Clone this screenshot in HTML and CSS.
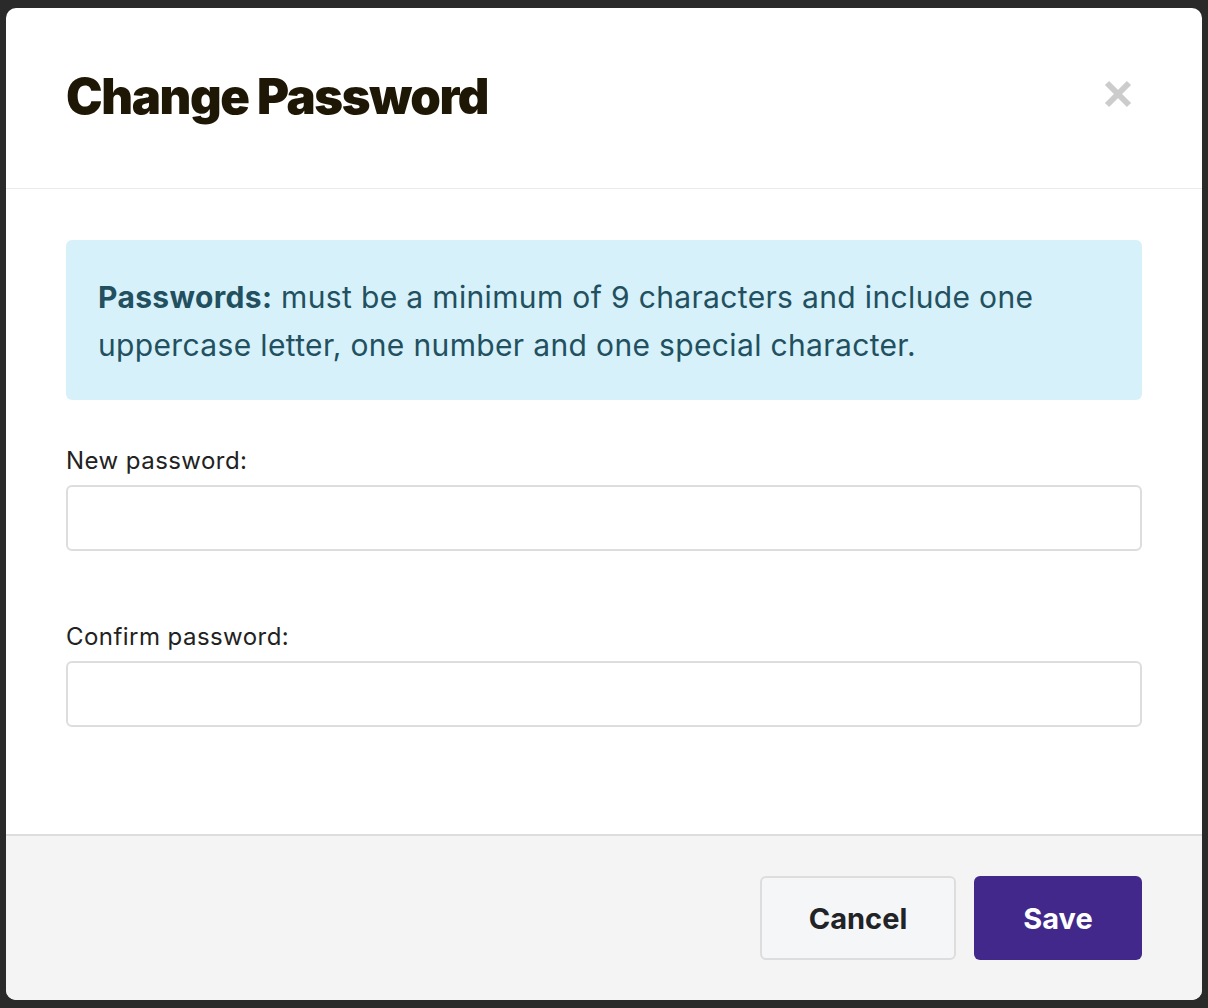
FILE: index.html
```html
<!DOCTYPE html>
<html>
<head>
<meta charset="utf-8">
<link rel="stylesheet" href="styles.css">
</head>
<body>
<div class="modal">
  <div class="modal-header">
    <h1 class="title">Change Password</h1>
    <button class="close" aria-label="Close">
      <svg width="28" height="28" viewBox="0 0 28 28"><path d="M3 3 L25 25 M25 3 L3 25" stroke="#cccccc" stroke-width="6" stroke-linecap="butt"/></svg>
    </button>
  </div>
  <div class="modal-body">
    <div class="info"><strong>Passwords:</strong> must be a minimum of 9 characters and include one uppercase letter, one number and one special character.</div>
    <div class="field">
      <label class="label">New password:</label>
      <input class="input" type="password">
    </div>
    <div class="field">
      <label class="label">Confirm password:</label>
      <input class="input" type="password">
    </div>
  </div>
  <div class="modal-footer">
    <button class="btn btn-cancel">Cancel</button>
    <button class="btn btn-save">Save</button>
  </div>
</div>
</body>
</html>
```

FILE: styles.css
```css
*, *::before, *::after {
  box-sizing: border-box;
}
html, body {
  margin: 0;
  padding: 0;
  background: #2a2a2a;
}
body {
  padding: 8px 6px;
  font-family: Inter, "Noto Sans", sans-serif;
}
.modal {
  width: 1196px;
  height: 992px;
  background: #ffffff;
  border-radius: 10px;
  overflow: hidden;
  display: flex;
  flex-direction: column;
}
.modal-header {
  height: 181px;
  flex: none;
  border-bottom: 1px solid #ebebeb;
  display: flex;
  align-items: center;
  justify-content: space-between;
  padding: 0 70px 4px 60px;
}
.title {
  margin: 0;
  font-family: Inter, sans-serif;
  font-weight: 900;
  font-size: 49px;
  letter-spacing: -1.4px;
  color: #1f1705;
}
.close {
  border: 0;
  background: none;
  padding: 0;
  width: 28px;
  height: 28px;
  display: flex;
  margin-bottom: 4px;
}
.modal-body {
  flex: 1;
  padding: 51px 60px 0 60px;
}
.info {
  background: #d6f1fa;
  border-radius: 6px;
  padding: 33px 32px 31px 32px;
  color: #22505f;
  font-size: 30px;
  line-height: 48px;
  letter-spacing: 0.35px;
}
.info strong {
  font-weight: 700;
}
.field {
  display: flex;
  flex-direction: column;
}
.info + .field { margin-top: 43px; }
.field + .field { margin-top: 68px; }
.label {
  font-size: 24px;
  line-height: 36px;
  letter-spacing: 0.45px;
  color: #222222;
  margin-bottom: 6px;
}
.input {
  height: 66px;
  width: 100%;
  border: 2px solid #dddddd;
  border-radius: 6px;
  background: #fff;
  margin: 0;
}
.modal-footer {
  height: 166px;
  flex: none;
  border-top: 2px solid #dddddd;
  background: #f4f4f4;
  display: flex;
  justify-content: flex-end;
  align-items: flex-start;
  gap: 18px;
  padding: 40px 60px 0 0;
}
.btn {
  height: 84px;
  border-radius: 6px;
  font-family: Inter, sans-serif;
  font-weight: 700;
  font-size: 29px;
  cursor: pointer;
}
.btn-cancel {
  width: 196px;
  background: #f5f6f8;
  border: 2px solid #dddddd;
  color: #222326;
}
.btn-save {
  width: 168px;
  background: #42288a;
  border: 0;
  color: #ffffff;
}
```
